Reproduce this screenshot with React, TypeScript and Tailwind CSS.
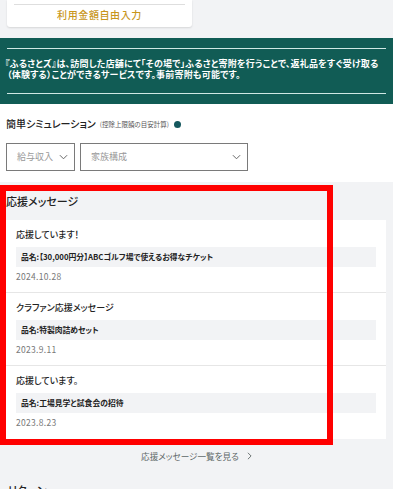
import React from "react";

const Chevron = ({ className = "" }: { className?: string }) => (
  <svg viewBox="0 0 10 6" className={className} fill="none" stroke="currentColor" strokeWidth="1.1">
    <polyline points="1,1 5,5 9,1" />
  </svg>
);

const items = [
  { title: "応援しています！", item: "品名:【30,000円分】ABCゴルフ場で使えるお得なチケット", date: "2024.10.28" },
  { title: "クラファン応援メッセージ", item: "品名:特製肉詰めセット", date: "2023.9.11" },
  { title: "応援しています。", item: "品名:工場見学と試食会の招待", date: "2023.8.23" },
];

export default function App() {
  return (
    <div className="relative w-[393px] h-[489px] overflow-hidden bg-[#f2f3f5] font-['Noto_Sans_CJK_JP',sans-serif] [font-feature-settings:'palt']">
      {/* top card */}
      <div className="h-[38px] px-[7px]">
        <div className="w-[185px] h-[27px] bg-white rounded-b-[3px] shadow-[0_1px_2px_rgba(0,0,0,0.12)] px-[7px] pt-[4px]">
          <div className="h-px bg-[#dedede]" />
          <div className="text-center text-[10px] leading-[20px] tracking-[0.6px] font-medium text-[#c8961c]">利用金額自由入力</div>
        </div>
      </div>

      {/* green band */}
      <div className="h-[66px] bg-[#115c55] px-[7px] pt-[10px]">
        <div className="h-px bg-[#cfe8e4]" />
        <div className="mt-[10px] -ml-[2px] text-white text-[9px] leading-[10.5px] tracking-[0.2px] font-bold">
          <div className="whitespace-nowrap">『ふるさとズ』は、訪問した店舗にて「その場で」ふるさと寄附を行うことで、返礼品をすぐ受け取る</div>
          <div className="whitespace-nowrap pl-[2px]">（体験する）ことができるサービスです。事前寄附も可能です。</div>
        </div>
        <div className="mt-[13px] h-px bg-[#cfe8e4]" />
      </div>

      {/* simulation */}
      <div className="h-[78px] bg-white px-[6px] pt-[13px]">
        <div className="flex items-center h-[14px]">
          <span className="text-[10px] font-medium text-[#222] leading-none">簡単シミュレーション</span>
          <span className="ml-[4px] text-[6.5px] text-[#555] leading-none">(控除上限額の目安計算)</span>
          <span className="ml-[5px] w-[7px] h-[7px] rounded-full bg-[#15585e]" />
        </div>
        <div className="mt-[12px] flex gap-[5px]">
          <div className="w-[69px] h-[28px] border border-[#7a7a7a] flex items-center justify-between pl-[10px] pr-[6px]">
            <span className="text-[9px] text-[#999]">給与収入</span>
            <Chevron className="w-[9px] h-[6px] text-[#666]" />
          </div>
          <div className="w-[168px] h-[28px] border border-[#7a7a7a] flex items-center justify-between pl-[10px] pr-[6px]">
            <span className="text-[9px] text-[#999]">家族構成</span>
            <Chevron className="w-[9px] h-[6px] text-[#666]" />
          </div>
        </div>
      </div>

      {/* messages */}
      <div className="px-[6px]">
        <div className="h-[38px] flex items-center text-[11px] font-medium text-[#222]">応援メッセージ</div>
        <div className="bg-white mr-[1px]">
          {items.map((it, i) => (
            <div key={i} className={`px-[10px] pt-[7px] h-[73px] ${i < items.length - 1 ? "border-b border-[#e6e6e6]" : ""}`}>
              <div className="text-[9px] leading-[16px] font-medium text-[#222]">{it.title}</div>
              <div className="mt-[4px] h-[20px] bg-[#f2f3f5] flex items-center px-[5px] text-[7.8px] font-bold text-[#222]">{it.item}</div>
              <div className="mt-[1px] text-[8.5px] leading-[16px] text-[#777] tracking-[0.3px]">{it.date}</div>
            </div>
          ))}
        </div>
        <div className="h-[34px] flex items-center justify-center gap-[8px] text-[8.6px] text-[#5d6767]">
          <span>応援メッセージ一覧を見る</span>
          <svg viewBox="0 0 6 10" className="w-[5px] h-[8px]" fill="none" stroke="currentColor" strokeWidth="1.1">
            <polyline points="1,1 5,5 1,9" />
          </svg>
        </div>
        <div className="mt-[10px] pl-[2px] text-[11px] leading-[14px] font-medium text-[#222]">リターン</div>
      </div>

      {/* annotation box */}
      <div className="absolute left-0 top-[185px] w-[333px] h-[260px] border-[6px] border-[#ff0000] pointer-events-none" />
    </div>
  );
}
